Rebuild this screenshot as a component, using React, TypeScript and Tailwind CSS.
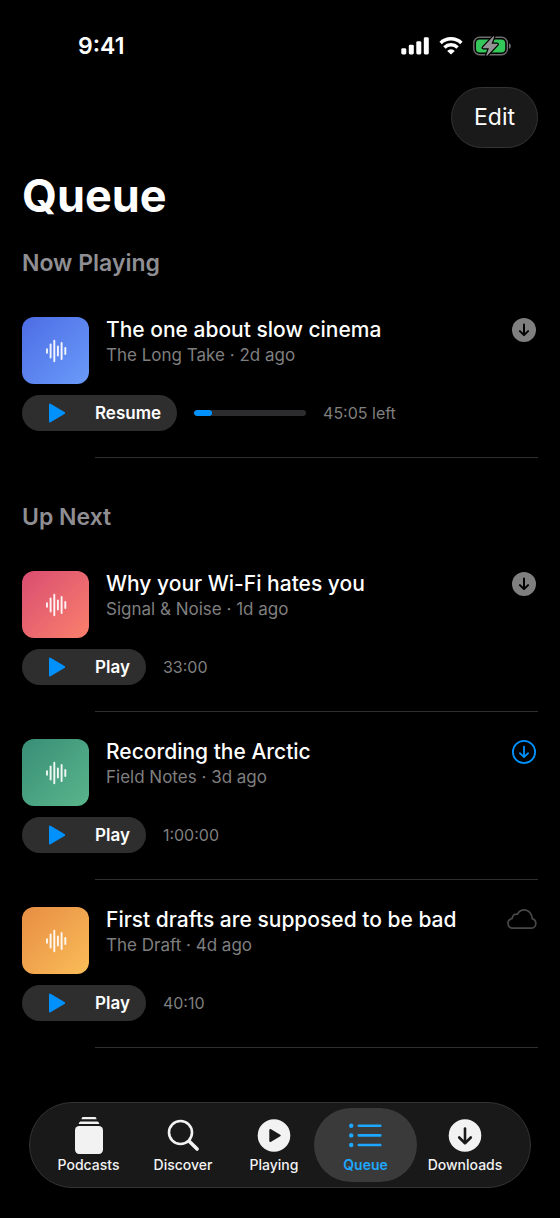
import type { ReactNode } from "react";

type DownloadState = "downloaded" | "downloading" | "cloud";

type Episode = {
    id: number;
    title: string;
    show: string;
    age: string;
    time: string;
    progress?: number;
    art: string;
    state: DownloadState;
};

const nowPlaying: Episode[] = [
    {
        id: 1,
        title: "The one about slow cinema",
        show: "The Long Take",
        age: "2d ago",
        time: "45:05 left",
        progress: 16,
        art: "from-[#4d6ce4] to-[#6b9bf9]",
        state: "downloaded",
    },
];

const upNext: Episode[] = [
    {
        id: 2,
        title: "Why your Wi-Fi hates you",
        show: "Signal & Noise",
        age: "1d ago",
        time: "33:00",
        art: "from-[#d94c70] to-[#fa806c]",
        state: "downloaded",
    },
    {
        id: 3,
        title: "Recording the Arctic",
        show: "Field Notes",
        age: "3d ago",
        time: "1:00:00",
        art: "from-[#388e76] to-[#5ab68c]",
        state: "downloading",
    },
    {
        id: 4,
        title: "First drafts are supposed to be bad",
        show: "The Draft",
        age: "4d ago",
        time: "40:10",
        art: "from-[#e78d43] to-[#fabd59]",
        state: "cloud",
    },
];

function SignalIcon() {
    return (
        <svg width="28" height="18" viewBox="0 0 28 18" fill="white" aria-hidden="true">
            <rect x="0.3" y="11.2" width="5" height="6.3" rx="1.4" />
            <rect x="7.8" y="7.8" width="5" height="9.7" rx="1.4" />
            <rect x="15.3" y="4.2" width="5" height="13.3" rx="1.4" />
            <rect x="22.8" y="0.3" width="5" height="17.2" rx="1.4" />
        </svg>
    );
}

function WifiIcon() {
    return (
        <svg width="24" height="18" viewBox="0 0 24 18" fill="none" stroke="white" strokeWidth="3.4" aria-hidden="true">
            <path d="M1.6 5.9a15 15 0 0 1 20.8 0" />
            <path d="M5.4 10.4a9.6 9.6 0 0 1 13.2 0" />
            <path d="M12 17.6l-3.8-3.7a5.400 5.400 0 0 1 7.6 0z" fill="white" stroke="none" />
        </svg>
    );
}

function BatteryIcon() {
    const bolt = "M20.6.8L10.4 11.7h6.400L13.900 19.200l10.200-10.900h-6.400z";
    return (
        <svg width="38" height="20" viewBox="0 0 38 20" aria-hidden="true">
            <rect x="0.8" y="1.2" width="33.6" height="17.6" rx="5.8" fill="none" stroke="#6e6e6e" strokeWidth="1.4" />
            <path d="M36 7.2c1.1.5 1.8 1.5 1.8 2.8s-.7 2.3-1.8 2.8z" fill="#6e6e6e" />
            <rect x="3" y="3.400" width="29.2" height="13.2" rx="3.8" fill="#34c759" />
            <path d={bolt} stroke="black" strokeWidth="3.6" strokeLinejoin="round" />
            <path d={bolt} fill="#949494" stroke="#949494" strokeWidth="1.2" strokeLinejoin="round" />
        </svg>
    );
}

function WaveformIcon() {
    const bars = [
        [2, 5.5],
        [5.6, 15],
        [9.3, 22.5],
        [12.9, 11],
        [16.6, 18],
        [20.3, 8],
    ];
    return (
        <svg width="22" height="24" viewBox="0 0 22 24" stroke="#fff" strokeOpacity="0.92" strokeWidth="1.9" strokeLinecap="round" aria-hidden="true">
            {bars.map(([x, h]) => (
                <line key={x} x1={x} x2={x} y1={12 - h / 2 + 0.9} y2={12 + h / 2 - 0.9} />
            ))}
        </svg>
    );
}

function StateIcon({ state }: { state: DownloadState }) {
    if (state === "cloud") {
        return (
            <svg width="30" height="26" viewBox="0 0 30 26" fill="none" stroke="#484848" strokeWidth="1.7" strokeLinejoin="round" role="img" aria-label="In cloud">
                <path d="M5.900 21.200H23.800c2.900 0 5-2.100 5-4.800 0-2.400-1.400-4.200-3.700-4.800C25 6.500 21.600 2.900 17.300 2.900c-3.100 0-5.600 1.700-6.900 4.400-2.700-.700-5 1.100-5.100 4C2.700 11.900 1 13.800 1 16.300c0 2.800 2 4.900 4.900 4.900z" />
            </svg>
        );
    }
    if (state === "downloading") {
        return (
            <svg width="26" height="26" viewBox="0 0 26 26" fill="none" stroke="#0091ff" strokeWidth="1.8" strokeLinecap="round" strokeLinejoin="round" role="img" aria-label="Downloading">
                <circle cx="13" cy="13" r="11.1" />
                <path d="M13 7.600v10.200M8.900 14.100l4.100 4 4.100-4" />
            </svg>
        );
    }
    return (
        <svg width="26" height="26" viewBox="0 0 26 26" fill="none" stroke="black" strokeWidth="2" strokeLinecap="round" strokeLinejoin="round" role="img" aria-label="Downloaded">
            <circle cx="13" cy="13" r="12" fill="#7f7f7f" stroke="none" />
            <path d="M13 7.600v10.200M8.900 14.100l4.100 4 4.100-4" />
        </svg>
    );
}

function EpisodeRow({ episode }: { episode: Episode }) {
    return (
        <li>
            <div className="pt-[27px] pb-[26px]">
                <div className="flex items-start">
                    <div className={`flex h-[67px] w-[67px] shrink-0 items-center justify-center rounded-xl bg-linear-to-br ${episode.art}`}>
                        <WaveformIcon />
                    </div>
                    <div className="ml-[17px] min-w-0 flex-1">
                        <h3 className="text-[21px] leading-[26px] font-medium text-white">{episode.title}</h3>
                        <p className="text-[17px] leading-6 text-[#7f7f7f]">
                            {episode.show} · {episode.age}
                        </p>
                    </div>
                    <div className="flex h-[26px] shrink-0 items-center pr-px">
                        <StateIcon state={episode.state} />
                    </div>
                </div>
                <div className="mt-[11px] flex items-center gap-[17px]">
                    <button className="flex h-9 items-center gap-[30px] rounded-full bg-[#2e2e2e] pr-4 pl-[27px] text-[17px] leading-5 font-semibold text-white">
                        <svg width="16" height="20" viewBox="0 0 16 20" fill="#0091ff" stroke="#0091ff" strokeWidth="2" strokeLinejoin="round" aria-hidden="true">
                            <path d="M1 1.600v16.800L15.400 10z" />
                        </svg>
                        {episode.progress ? "Resume" : "Play"}
                    </button>
                    {episode.progress && (
                        <div
                            role="progressbar"
                            aria-label="Played"
                            aria-valuenow={episode.progress}
                            className="h-[6px] w-28 overflow-hidden rounded-full bg-[#2c2c2e]"
                        >
                            <div className="h-full rounded-full bg-[#0091ff]" style={{ width: `${episode.progress}%` }} />
                        </div>
                    )}
                    <span className="text-base text-[#7f7f7f]">{episode.time}</span>
                </div>
            </div>
            <div className="ml-[73px] h-px bg-[#2e2e2e]" />
        </li>
    );
}

function Section({ title, episodes }: { title: string; episodes: Episode[] }) {
    return (
        <section>
            <h2 className="mb-[11px] text-[23px] leading-8 font-semibold text-[#8e8e93]">{title}</h2>
            <ul>
                {episodes.map((episode) => (
                    <EpisodeRow key={episode.id} episode={episode} />
                ))}
            </ul>
        </section>
    );
}

function Tab({ label, active, children }: { label: string; active?: boolean; children: ReactNode }) {
    return (
        <a
            href="#"
            aria-current={active ? "page" : undefined}
            className={`relative flex flex-col items-center pt-2 ${active ? "text-[#1ea7ff]" : "text-[#f2f2f2]"}`}
        >
            {active && <span className="absolute inset-y-0 -inset-x-[5px] rounded-[38px] bg-[#3a3a3a]" />}
            <svg width="38" height="38" viewBox="0 0 38 38" className="relative" aria-hidden="true">
                {children}
            </svg>
            <span className={`relative mt-px text-sm leading-5 ${active ? "font-semibold" : "font-medium"}`}>{label}</span>
        </a>
    );
}

function TabBar() {
    return (
        <nav className="sticky bottom-0 mt-auto px-[29px] pb-[30px]">
            <div className="grid h-[86px] grid-cols-[97fr_92fr_90fr_93fr_106fr] rounded-[43px] border border-[#333] bg-[#191919] py-[5px] pr-3 pl-[10px]">
                <Tab label="Podcasts">
                    <path d="M13 1h12c.8 0 1.300.800 1.500 2.200h-15C11.700 1.800 12.200 1 13 1z" fill="currentColor" />
                    <path d="M10.600 5.500h16.800c.900 0 1.600.900 1.900 2.400H8.700c.300-1.500 1-2.400 1.900-2.400z" fill="currentColor" />
                    <rect x="5" y="10" width="28" height="28" rx="4.200" fill="currentColor" />
                </Tab>
                <Tab label="Discover">
                    <circle cx="16.500" cy="16.500" r="11.500" fill="none" stroke="currentColor" strokeWidth="2.600" />
                    <path d="M25.200 25.200l7.900 7.900" stroke="currentColor" strokeWidth="3.600" strokeLinecap="round" />
                </Tab>
                <Tab label="Playing">
                    <circle cx="19" cy="19.500" r="16.300" fill="currentColor" />
                    <path d="M15.200 13.900v11.200L24.800 19.500z" fill="#191919" stroke="#191919" strokeWidth="1.800" strokeLinejoin="round" />
                </Tab>
                <Tab label="Queue" active>
                    <g stroke="currentColor" strokeWidth="2.600" strokeLinecap="round">
                        <path d="M11.800 9.700h21.500M11.800 19.400h21.500M11.800 29h21.500" />
                    </g>
                    <circle cx="4.200" cy="9.700" r="2.200" fill="currentColor" />
                    <circle cx="4.200" cy="19.400" r="2.200" fill="currentColor" />
                    <circle cx="4.200" cy="29" r="2.200" fill="currentColor" />
                </Tab>
                <Tab label="Downloads">
                    <circle cx="19" cy="19.500" r="16.300" fill="currentColor" />
                    <path
                        d="M19 12.500v14.300M13.200 21.500l5.800 5.700 5.800-5.700"
                        fill="none"
                        stroke="#191919"
                        strokeWidth="2.600"
                        strokeLinecap="round"
                        strokeLinejoin="round"
                    />
                </Tab>
            </div>
        </nav>
    );
}

export default function App() {
    return (
        <div className="flex min-h-screen flex-col bg-black font-['Inter',sans-serif] text-white">
            <header className="px-[22px]">
                <div className="flex items-center justify-between pt-[30px] pr-[27px] pl-14">
                    <span className="text-[23px] leading-8 font-semibold">9:41</span>
                    <div className="flex items-center gap-[10px]">
                        <SignalIcon />
                        <WifiIcon />
                        <BatteryIcon />
                    </div>
                </div>
                <div className="mt-[25px] flex justify-end">
                    <button className="h-[61px] rounded-full border border-[#333] bg-[#1a1a1a] px-[22px] text-[23px]">Edit</button>
                </div>
                <h1 className="mt-5 text-[45px] leading-[56px] font-bold">Queue</h1>
            </header>
            <main className="mt-[23px] flex flex-col gap-[43px] px-[22px] pb-[54px]">
                <Section title="Now Playing" episodes={nowPlaying} />
                <Section title="Up Next" episodes={upNext} />
            </main>
            <TabBar />
        </div>
    );
}
